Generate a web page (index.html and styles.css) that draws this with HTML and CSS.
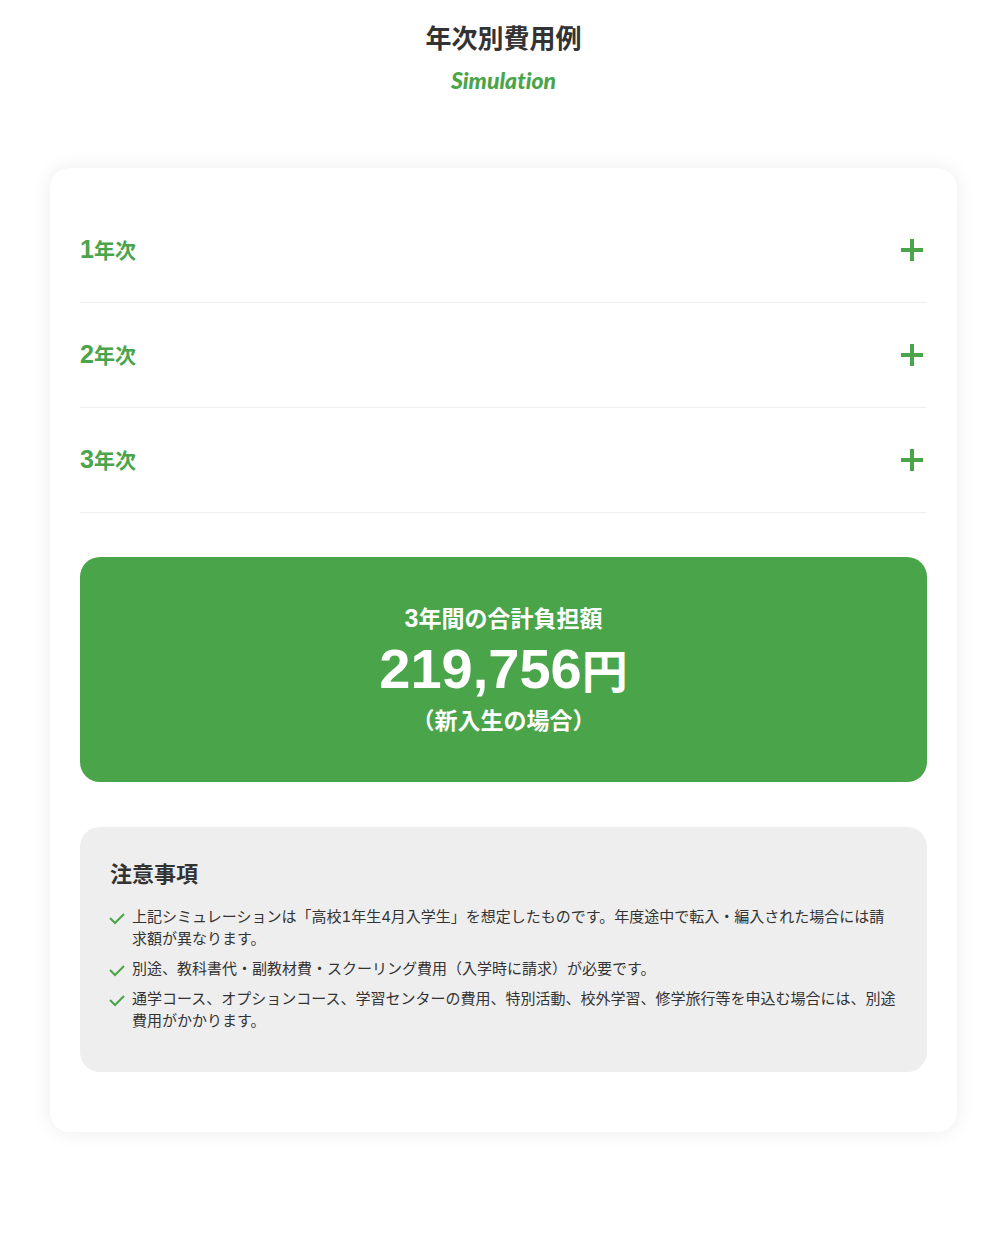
FILE: index.html
```html
<!DOCTYPE html>
<html lang="ja">
<head>
  <meta charset="UTF-8" />
  <meta name="viewport" content="width=device-width, initial-scale=1.0" />
  <title>年次別費用例</title>
  <link rel="stylesheet" href="styles.css">
</head>
<body>
  <section class="simulation">
    <div class="section-title">
      <h2>年次別費用例</h2>
      <p>Simulation</p>
    </div>
    <div class="card">
      <div class="accordion">
        <h3>
          <button type="button">
            <span><span class="num">1</span>年次</span>
            <svg class="plus" viewBox="0 0 30 30" aria-hidden="true"><path d="M4 15h22M15 4v22" /></svg>
          </button>
        </h3>
        <h3>
          <button type="button">
            <span><span class="num">2</span>年次</span>
            <svg class="plus" viewBox="0 0 30 30" aria-hidden="true"><path d="M4 15h22M15 4v22" /></svg>
          </button>
        </h3>
        <h3>
          <button type="button">
            <span><span class="num">3</span>年次</span>
            <svg class="plus" viewBox="0 0 30 30" aria-hidden="true"><path d="M4 15h22M15 4v22" /></svg>
          </button>
        </h3>
      </div>
      <div class="total">
        <p><span class="num">3</span>年間の合計負担額</p>
        <p class="price"><span class="num">219,756</span>円</p>
        <p>（新入生の場合）</p>
      </div>
      <div class="notes">
        <h3>注意事項</h3>
        <ul>
          <li>
            <svg class="check" viewBox="0 0 15 24" aria-hidden="true"><path d="M0 12l5 5 9-9" /></svg>
            <span>上記シミュレーションは「高校1年生4月入学生」を想定したものです。年度途中で転入・編入された場合には請求額が異なります。</span>
          </li>
          <li>
            <svg class="check" viewBox="0 0 15 24" aria-hidden="true"><path d="M0 12l5 5 9-9" /></svg>
            <span>別途、教科書代・副教材費・スクーリング費用（入学時に請求）が必要です。</span>
          </li>
          <li>
            <svg class="check" viewBox="0 0 15 24" aria-hidden="true"><path d="M0 12l5 5 9-9" /></svg>
            <span>通学コース、オプションコース、学習センターの費用、特別活動、校外学習、修学旅行等を申込む場合には、別途費用がかかります。</span>
          </li>
        </ul>
      </div>
    </div>
  </section>
</body>
</html>
```
FILE: styles.css
```css
* {
  box-sizing: border-box;
  margin: 0;
  padding: 0;
}
body {
  background: #fff;
  color: #333;
  font-family: Inter, "Noto Sans CJK JP", sans-serif;
  font-size: 15px;
  line-height: 22px;
  font-variant-numeric: tabular-nums;
}
.simulation {
  padding: 20px 35px 119px 50px;
}
.section-title {
  margin-bottom: 66px;
  text-align: center;
}
.section-title h2 {
  font-size: 26px;
  line-height: 38px;
}
.section-title p {
  color: #4aa44a;
  font-family: "Brush Script MT", Lato, cursive;
  font-size: 23px;
  font-style: italic;
  font-weight: 900;
  font-variant-ligatures: none;
  line-height: 44px;
}
.card {
  padding: 30px 30px 60px;
  border-radius: 20px;
  background: #fff;
  box-shadow: 0 0 20px rgba(0, 0, 0, 0.08);
}
.num {
  font-family: "Liberation Sans", Arial, sans-serif;
  font-size: 25px;
}
.accordion {
  margin-bottom: 44px;
}
.accordion h3 {
  border-bottom: 1px solid #eee;
}
.accordion button {
  display: flex;
  align-items: center;
  justify-content: space-between;
  width: 100%;
  height: 104px;
  border: none;
  background: none;
  color: #4aa44a;
  font: inherit;
  font-size: 21px;
  font-weight: bold;
  cursor: pointer;
}
.plus {
  width: 30px;
  height: 30px;
  fill: none;
  stroke: #4aa44a;
  stroke-width: 4;
}
.total {
  margin-bottom: 45px;
  padding: 44px 20px;
  border-radius: 20px;
  background: #4aa44a;
  color: #fff;
  font-size: 23px;
  font-weight: bold;
  line-height: 34px;
  text-align: center;
}
.total .price {
  font-size: 46px;
  line-height: 65px;
}
.price .num {
  font-size: 56px;
}
.notes {
  padding: 30px 30px 40px;
  border-radius: 20px;
  background: #eee;
}
.notes h3 {
  margin-bottom: 15px;
  font-size: 22px;
  line-height: 34px;
}
.notes ul {
  display: flex;
  flex-direction: column;
  gap: 8px;
  list-style: none;
}
.notes li {
  display: flex;
  align-items: flex-start;
  gap: 7px;
}
.check {
  flex: none;
  width: 15px;
  height: 24px;
  margin-bottom: -2px;
  overflow: visible;
  fill: none;
  stroke: #4aa44a;
  stroke-width: 2;
}
```
